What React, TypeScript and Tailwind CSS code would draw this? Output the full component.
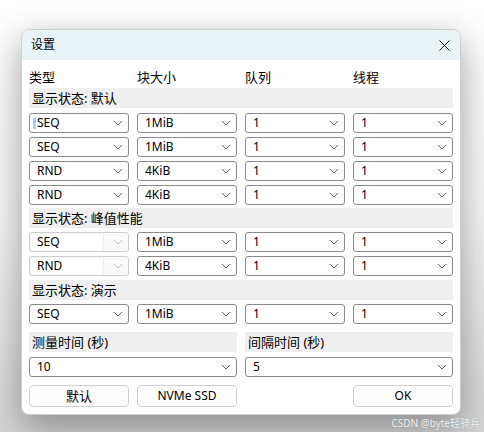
import React from "react"

const font = { fontFamily: '"Noto Sans", "Noto Sans CJK SC", sans-serif' }

function Chevron({ light }: { light?: boolean }) {
  return (
    <svg width="10" height="6" viewBox="0 0 10 6" fill="none">
      <path d="M1 1l4 4 4-4" stroke={light ? "#c4c4c4" : "#606060"} strokeWidth="1" />
    </svg>
  )
}

function Combo({ value, focus, disabled }: { value: string; focus?: boolean; disabled?: boolean }) {
  if (disabled) {
    return (
      <div className="flex h-[20px] items-center rounded-[3px] border border-[#cdcdcd] bg-[#fafafa] pl-[2px] pr-[5px]">
        <div className="flex h-[16px] flex-1 items-center border-r border-[#ededed] bg-white pl-[5px] text-black">
          {value}
        </div>
        <div className="ml-[9px] flex">
          <Chevron light />
        </div>
      </div>
    )
  }
  return (
    <div className="flex h-[20px] items-center justify-between rounded-[3px] border border-[#8a8a8a] bg-white pl-[7px] pr-[5px]">
      <div className="flex items-center">
        {focus && <span className="-ml-[4px] mr-[1px] h-[11px] w-[3px] bg-[#99d1ff]" />}
        <span>{value}</span>
      </div>
      <Chevron />
    </div>
  )
}

function Section({ title }: { title: string }) {
  return (
    <div className="flex h-[20px] items-center bg-[#efefef] pl-[3px] text-[13px]">{title}</div>
  )
}

function Row({ cells }: { cells: { v: string; focus?: boolean; disabled?: boolean }[] }) {
  return (
    <div className="grid grid-cols-4 gap-x-[8px]">
      {cells.map((c, i) => (
        <Combo key={i} value={c.v} focus={c.focus} disabled={c.disabled} />
      ))}
    </div>
  )
}

export default function App() {
  return (
    <div className="h-[432px] w-[484px] overflow-hidden bg-gradient-to-b from-white via-[#f6f6f6] to-[#d4d4d4]" style={font}>
      <div className="ml-[21px] pt-[29px]">
        <div className="w-[440px] overflow-hidden rounded-[8px] border border-[#cfcfcf] bg-white text-[12px] leading-[16px] text-black shadow-[0_12px_36px_rgba(0,0,0,0.36)]">
          {/* title bar */}
          <div className="flex h-[30px] items-center justify-between bg-[#eaf4f7] pl-[9px] pr-[10px]">
            <span>设置</span>
            <svg width="11" height="11" viewBox="0 0 11 11">
              <path d="M0.5 0.5l10 10M10.5 0.5l-10 10" stroke="#1a1a1a" strokeWidth="1" />
            </svg>
          </div>

          <div className="px-[7px] pb-[7px]">
            {/* column headers */}
            <div className="grid grid-cols-4 gap-x-[8px] pt-[9px] pb-[3px] text-[13px]">
              <span>类型</span>
              <span>块大小</span>
              <span>队列</span>
              <span>线程</span>
            </div>

            <Section title="显示状态: 默认" />
            <div className="mt-[5px] flex flex-col gap-[4px]">
              <Row cells={[{ v: "SEQ", focus: true }, { v: "1MiB" }, { v: "1" }, { v: "1" }]} />
              <Row cells={[{ v: "SEQ" }, { v: "1MiB" }, { v: "1" }, { v: "1" }]} />
              <Row cells={[{ v: "RND" }, { v: "4KiB" }, { v: "1" }, { v: "1" }]} />
              <Row cells={[{ v: "RND" }, { v: "4KiB" }, { v: "1" }, { v: "1" }]} />
            </div>

            <div className="mt-[3px]">
              <Section title="显示状态: 峰值性能" />
            </div>
            <div className="mt-[4px] flex flex-col gap-[4px]">
              <Row cells={[{ v: "SEQ", disabled: true }, { v: "1MiB" }, { v: "1" }, { v: "1" }]} />
              <Row cells={[{ v: "RND", disabled: true }, { v: "4KiB" }, { v: "1" }, { v: "1" }]} />
            </div>

            <div className="mt-[4px]">
              <Section title="显示状态: 演示" />
            </div>
            <div className="mt-[4px]">
              <Row cells={[{ v: "SEQ" }, { v: "1MiB" }, { v: "1" }, { v: "1" }]} />
            </div>

            {/* timing */}
            <div className="mt-[8px] grid grid-cols-2 gap-x-[8px]">
              <Section title="测量时间 (秒)" />
              <Section title="间隔时间 (秒)" />
            </div>
            <div className="mt-[5px] grid grid-cols-2 gap-x-[8px]">
              <Combo value="10" />
              <Combo value="5" />
            </div>

            {/* buttons */}
            <div className="mt-[8px] grid grid-cols-4 gap-x-[8px]">
              <button className="h-[22px] rounded-[4px] border border-[#d0d0d0] bg-[#fdfdfd] text-[13px]">默认</button>
              <button className="h-[22px] rounded-[4px] border border-[#d0d0d0] bg-[#fdfdfd] text-[12px]">NVMe SSD</button>
              <div />
              <button className="h-[22px] rounded-[4px] border border-[#d0d0d0] bg-[#fdfdfd] text-[12px]">OK</button>
            </div>
          </div>
        </div>
      </div>
      <div className="mt-[1px] pr-[4px] text-right text-[10px] leading-[14px] text-[#f2f2f2] [text-shadow:0_0_1px_#888]">
        CSDN @byte轻骑兵
      </div>
    </div>
  )
}
